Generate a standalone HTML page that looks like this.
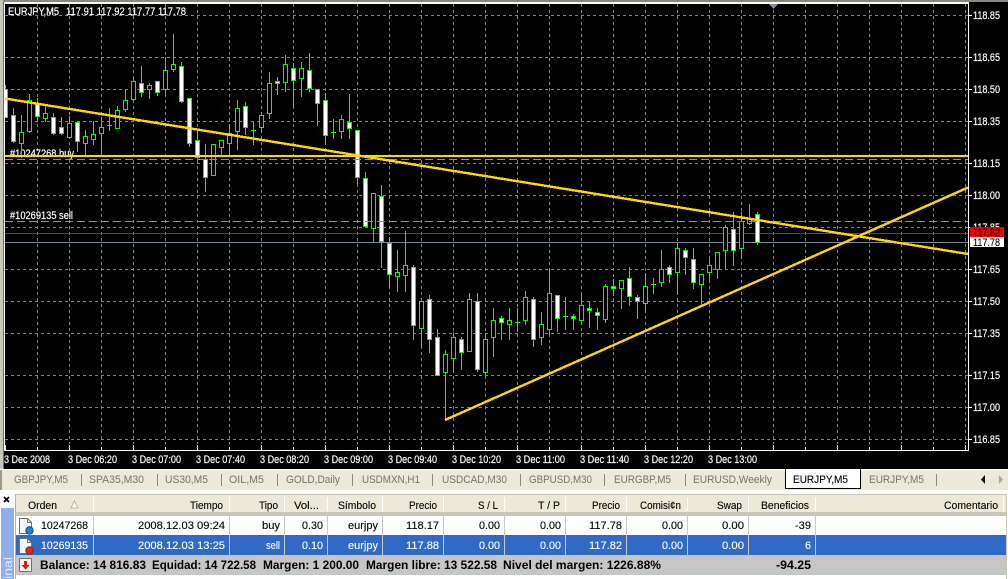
<!DOCTYPE html>
<html><head><meta charset="utf-8"><style>
html,body{margin:0;padding:0;background:#fff;width:1008px;height:579px;overflow:hidden}
svg{display:block}
text{font-family:"Liberation Sans",sans-serif;font-size:11px}
.c{font-size:11px;fill:#fff;stroke:#fff;stroke-width:.2}
.t{fill:#74746a}
.k{fill:#000;stroke:#000;stroke-width:.12}
.r{fill:#fff;stroke:#fff;stroke-width:.12}
.b{font-weight:bold;fill:#000;font-size:11.5px}
</style></head><body>
<svg width="1008" height="579" viewBox="0 0 1008 579" xmlns="http://www.w3.org/2000/svg">
<rect width="1008" height="579" fill="#fff"/>
<!-- chart frame -->
<rect x="0" y="0" width="1008" height="469" fill="#000"/>
<rect x="0" y="0" width="1008" height="2" fill="#8a8a7c"/>
<rect x="0" y="0" width="3" height="469" fill="#c8c6b8"/>
<rect x="3" y="2" width="1" height="467" fill="#6e6e66"/>
<g shape-rendering="crispEdges">
<rect x="4" y="2" width="965" height="2" fill="#fff"/>
<rect x="4" y="2" width="1" height="449" fill="#fff"/>
<rect x="968" y="2" width="1" height="449" fill="#fff"/>
<rect x="4" y="450" width="965" height="1" fill="#fff"/>
<!-- grid -->
<path fill="none" stroke="#778899" stroke-dasharray="3 3" d="M5 15.5H968M5 57.5H968M5 89.5H968M5 121.5H968M5 163.5H968M5 195.5H968M5 227.5H968M5 269.5H968M5 301.5H968M5 333.5H968M5 375.5H968M5 407.5H968M5 439.5H968"/>
<path fill="none" stroke="#778899" stroke-dasharray="3 3" d="M37.5 4V444M69.5 4V444M101.5 4V444M133.5 4V444M165.5 4V444M197.5 4V444M229.5 4V444M261.5 4V444M293.5 4V444M325.5 4V444M357.5 4V444M389.5 4V444M421.5 4V444M453.5 4V444M485.5 4V444M517.5 4V444M549.5 4V444M581.5 4V444M613.5 4V444M645.5 4V444M677.5 4V444M709.5 4V444M741.5 4V444M773.5 4V444M805.5 4V444M837.5 4V444M869.5 4V444M901.5 4V444M933.5 4V444M965.5 4V444"/>
<path fill="none" stroke="#fff" d="M5.5 445V450M37.5 447V450M69.5 445V450M101.5 447V450M133.5 445V450M165.5 447V450M197.5 445V450M229.5 447V450M261.5 445V450M293.5 447V450M325.5 445V450M357.5 447V450M389.5 445V450M421.5 447V450M453.5 445V450M485.5 447V450M517.5 445V450M549.5 447V450M581.5 445V450M613.5 447V450M645.5 445V450M677.5 447V450M709.5 445V450M741.5 447V450M773.5 445V450M805.5 447V450M837.5 445V450M869.5 447V450M901.5 445V450M933.5 447V450M965.5 445V450"/>
<path fill="none" stroke="#fff" d="M969 15.5h3M969 57.5h3M969 89.5h3M969 121.5h3M969 163.5h3M969 195.5h3M969 227.5h3M969 269.5h3M969 301.5h3M969 333.5h3M969 375.5h3M969 407.5h3M969 439.5h3"/>
</g>
<!-- order labels -->
<text class="c" lengthAdjust="spacingAndGlyphs" x="10" y="157" textLength="64">#10247268 buy</text>
<text class="c" lengthAdjust="spacingAndGlyphs" x="10" y="219" textLength="63">#10269135 sell</text>
<svg x="5" y="4" width="963" height="446" viewBox="5 4 963 446">
<g shape-rendering="crispEdges">
<!-- price lines -->
<rect x="5" y="233" width="963" height="1" fill="#e01010"/>
<rect x="5" y="242" width="963" height="1" fill="#778899"/>
<!-- wicks -->
<path fill="none" stroke="#00ff00" d="M5.5 85V118M13.5 108V143M21.5 115V158M29.5 94V133M37.5 98V122M45.5 106V122M53.5 113V135M61.5 117V135M69.5 116V137M77.5 122V152M85.5 130V155M93.5 121V145M101.5 117V155M109.5 108V131M117.5 106V128M125.5 89V112M133.5 77V101M141.5 66V97M149.5 83V99M157.5 81V96M165.5 57V96M173.5 34V72M181.5 62V103M189.5 98V147M197.5 130V161M205.5 144V192M213.5 144V175M221.5 140V156M229.5 124V156M237.5 100V150M245.5 102V135M253.5 122V145M261.5 112V132M269.5 72V119M277.5 77V95M285.5 55V92M293.5 63V107M301.5 62V97M309.5 53V92M317.5 89V126M325.5 93V144M333.5 119V139M341.5 115V139M349.5 94V139M357.5 130V185M365.5 172V226M373.5 193V243M381.5 185V268M389.5 237V288M397.5 250V292M405.5 231V292M413.5 265V340M421.5 301V347M429.5 295V353M437.5 329V375M445.5 350V420M453.5 332V372M461.5 337V370M469.5 293V351M477.5 293V372M485.5 333V377M493.5 308V357M501.5 316V340M509.5 308V340M517.5 308V332M525.5 291V325M533.5 297V347M541.5 312V345M549.5 268V336M557.5 295V332M565.5 297V330M573.5 314V330M581.5 295V325M589.5 302V328M597.5 308V330M605.5 284V323M613.5 279V296M621.5 280V309M629.5 267V306M637.5 295V319M645.5 273V313M653.5 278V294M661.5 250V287M669.5 265V283M677.5 243V294M685.5 248V275M693.5 248V289M701.5 274V306M709.5 259V282M717.5 252V279M725.5 225V269M733.5 212V266M741.5 212V258M749.5 204V225M757.5 212V245M107 125.5h5M251 130.5h5M331 132.5h5M515 322.5h5M563 316.5h5M651 284.5h5"/>
<!-- hollow bodies -->
<path fill="#000" stroke="#00ff00" d="M19.5 132.5h4V143.5h-4zM27.5 100.5h4V131.5h-4zM43.5 113.5h4V118.5h-4zM67.5 123.5h4V137.5h-4zM83.5 136.5h4V143.5h-4zM91.5 134.5h4V139.5h-4zM99.5 127.5h4V133.5h-4zM115.5 110.5h4V128.5h-4zM123.5 100.5h4V109.5h-4zM131.5 81.5h4V99.5h-4zM147.5 85.5h4V89.5h-4zM163.5 70.5h4V89.5h-4zM171.5 64.5h4V69.5h-4zM211.5 144.5h4V175.5h-4zM219.5 140.5h4V147.5h-4zM227.5 133.5h4V143.5h-4zM235.5 108.5h4V131.5h-4zM259.5 115.5h4V127.5h-4zM267.5 83.5h4V113.5h-4zM283.5 64.5h4V82.5h-4zM299.5 68.5h4V78.5h-4zM339.5 119.5h4V131.5h-4zM371.5 193.5h4V228.5h-4zM395.5 272.5h4V276.5h-4zM403.5 265.5h4V275.5h-4zM419.5 301.5h4V328.5h-4zM443.5 354.5h4V372.5h-4zM451.5 337.5h4V358.5h-4zM467.5 299.5h4V351.5h-4zM483.5 339.5h4V372.5h-4zM491.5 320.5h4V337.5h-4zM507.5 320.5h4V324.5h-4zM523.5 297.5h4V320.5h-4zM539.5 324.5h4V337.5h-4zM547.5 293.5h4V329.5h-4zM579.5 305.5h4V320.5h-4zM603.5 286.5h4V319.5h-4zM619.5 280.5h4V288.5h-4zM643.5 286.5h4V303.5h-4zM659.5 269.5h4V282.5h-4zM675.5 248.5h4V272.5h-4zM699.5 274.5h4V284.5h-4zM707.5 265.5h4V272.5h-4zM715.5 252.5h4V269.5h-4zM723.5 227.5h4V250.5h-4zM739.5 221.5h4V248.5h-4zM747.5 218.5h4V223.5h-4z"/>
<!-- filled bodies -->
<path fill="#fff" stroke="#00ff00" d="M3.5 89.5h4V117.5h-4zM11.5 115.5h4V141.5h-4zM35.5 103.5h4V116.5h-4zM51.5 117.5h4V133.5h-4zM59.5 127.5h4V133.5h-4zM75.5 122.5h4V141.5h-4zM139.5 83.5h4V92.5h-4zM155.5 81.5h4V92.5h-4zM179.5 66.5h4V101.5h-4zM187.5 98.5h4V143.5h-4zM195.5 140.5h4V157.5h-4zM203.5 159.5h4V177.5h-4zM243.5 106.5h4V127.5h-4zM275.5 81.5h4V83.5h-4zM291.5 68.5h4V80.5h-4zM307.5 70.5h4V88.5h-4zM315.5 89.5h4V103.5h-4zM323.5 100.5h4V135.5h-4zM347.5 122.5h4V128.5h-4zM355.5 130.5h4V177.5h-4zM363.5 178.5h4V226.5h-4zM379.5 196.5h4V241.5h-4zM387.5 243.5h4V274.5h-4zM411.5 267.5h4V325.5h-4zM427.5 299.5h4V339.5h-4zM435.5 337.5h4V375.5h-4zM459.5 339.5h4V352.5h-4zM475.5 301.5h4V369.5h-4zM499.5 318.5h4V322.5h-4zM531.5 299.5h4V339.5h-4zM555.5 295.5h4V318.5h-4zM571.5 316.5h4V318.5h-4zM587.5 308.5h4V310.5h-4zM595.5 312.5h4V315.5h-4zM611.5 286.5h4V288.5h-4zM627.5 278.5h4V296.5h-4zM635.5 297.5h4V301.5h-4zM667.5 267.5h4V274.5h-4zM683.5 250.5h4V257.5h-4zM691.5 259.5h4V282.5h-4zM731.5 229.5h4V250.5h-4zM755.5 214.5h4V242.5h-4z"/>
<!-- order dashed lines -->
<path fill="none" stroke="#32cd32" stroke-dasharray="8 4" d="M5 159.5H968M5 221.5H968"/>
<!-- drawn lines -->
<rect x="5" y="155" width="963" height="2" fill="#ffd700"/>
<path fill="none" stroke="#ffd700" stroke-width="2.4" d="M5 98.500L968 254M445 420L968 187.500"/>
</g>
</svg>
<!-- top marker -->
<path d="M769 4h9l-4.500 5z" fill="#8a8f98"/>
<!-- chart title -->
<text class="c" lengthAdjust="spacingAndGlyphs" x="8" y="15" textLength="51">EURJPY,M5</text>
<text class="c" lengthAdjust="spacingAndGlyphs" x="66" y="15" textLength="120">117.91 117.92 117.77 117.78</text>
<!-- price labels -->
<text class="c" lengthAdjust="spacingAndGlyphs" x="973" y="19" textLength="27">118.85</text>
<text class="c" lengthAdjust="spacingAndGlyphs" x="973" y="61" textLength="27">118.65</text>
<text class="c" lengthAdjust="spacingAndGlyphs" x="973" y="93" textLength="27">118.50</text>
<text class="c" lengthAdjust="spacingAndGlyphs" x="973" y="125" textLength="27">118.35</text>
<text class="c" lengthAdjust="spacingAndGlyphs" x="973" y="167" textLength="27">118.15</text>
<text class="c" lengthAdjust="spacingAndGlyphs" x="973" y="199" textLength="27">118.00</text>
<text class="c" lengthAdjust="spacingAndGlyphs" x="973" y="231" textLength="27">117.85</text>
<text class="c" lengthAdjust="spacingAndGlyphs" x="973" y="273" textLength="27">117.65</text>
<text class="c" lengthAdjust="spacingAndGlyphs" x="973" y="305" textLength="27">117.50</text>
<text class="c" lengthAdjust="spacingAndGlyphs" x="973" y="337" textLength="27">117.35</text>
<text class="c" lengthAdjust="spacingAndGlyphs" x="973" y="379" textLength="27">117.15</text>
<text class="c" lengthAdjust="spacingAndGlyphs" x="973" y="411" textLength="27">117.00</text>
<text class="c" lengthAdjust="spacingAndGlyphs" x="973" y="443" textLength="27">116.85</text>
<g shape-rendering="crispEdges">
<rect x="970" y="227" width="34" height="10" fill="#f00000"/>
<rect x="970" y="237" width="34" height="10" fill="#fff"/>
</g>
<text class="k" lengthAdjust="spacingAndGlyphs" x="973" y="236" textLength="27">117.82</text>
<text class="k" lengthAdjust="spacingAndGlyphs" x="973" y="246" textLength="27">117.78</text>
<!-- time labels -->
<text class="c" lengthAdjust="spacingAndGlyphs" x="4" y="463" textLength="46">3 Dec 2008</text>
<text class="c" lengthAdjust="spacingAndGlyphs" x="68" y="463" textLength="49">3 Dec 06:20</text>
<text class="c" lengthAdjust="spacingAndGlyphs" x="132" y="463" textLength="49">3 Dec 07:00</text>
<text class="c" lengthAdjust="spacingAndGlyphs" x="196" y="463" textLength="49">3 Dec 07:40</text>
<text class="c" lengthAdjust="spacingAndGlyphs" x="260" y="463" textLength="49">3 Dec 08:20</text>
<text class="c" lengthAdjust="spacingAndGlyphs" x="324" y="463" textLength="49">3 Dec 09:00</text>
<text class="c" lengthAdjust="spacingAndGlyphs" x="388" y="463" textLength="49">3 Dec 09:40</text>
<text class="c" lengthAdjust="spacingAndGlyphs" x="452" y="463" textLength="49">3 Dec 10:20</text>
<text class="c" lengthAdjust="spacingAndGlyphs" x="516" y="463" textLength="49">3 Dec 11:00</text>
<text class="c" lengthAdjust="spacingAndGlyphs" x="580" y="463" textLength="49">3 Dec 11:40</text>
<text class="c" lengthAdjust="spacingAndGlyphs" x="644" y="463" textLength="49">3 Dec 12:20</text>
<text class="c" lengthAdjust="spacingAndGlyphs" x="708" y="463" textLength="49">3 Dec 13:00</text>
<!-- tab bar -->
<g shape-rendering="crispEdges">
<rect x="0" y="469" width="1008" height="21" fill="#ece9d8"/>
<rect x="0" y="469" width="1008" height="1" fill="#fff"/>
<rect x="0" y="470" width="2" height="20" fill="#9c9a8c"/>
<rect x="0" y="490" width="1008" height="2" fill="#fff"/>
<path fill="none" stroke="#8a8a7e" d="M81.500 474V486M157.500 474V486M221.500 474V486M277.500 474V486M352.500 474V486M432.500 474V486M520.500 474V486M604.500 474V486M685.500 474V486M936.500 474V486"/>
<rect x="785" y="469" width="76" height="20" fill="#000"/>
<rect x="786" y="469" width="74" height="19" fill="#fff"/>
</g>
<text class="t" lengthAdjust="spacingAndGlyphs" x="14" y="483" textLength="54">GBPJPY,M5</text>
<text class="t" lengthAdjust="spacingAndGlyphs" x="89" y="483" textLength="55">SPA35,M30</text>
<text class="t" lengthAdjust="spacingAndGlyphs" x="165" y="483" textLength="43">US30,M5</text>
<text class="t" lengthAdjust="spacingAndGlyphs" x="229" y="483" textLength="35">OIL,M5</text>
<text class="t" lengthAdjust="spacingAndGlyphs" x="286" y="483" textLength="54">GOLD,Daily</text>
<text class="t" lengthAdjust="spacingAndGlyphs" x="362" y="483" textLength="58">USDMXN,H1</text>
<text class="t" lengthAdjust="spacingAndGlyphs" x="442" y="483" textLength="65">USDCAD,M30</text>
<text class="t" lengthAdjust="spacingAndGlyphs" x="529" y="483" textLength="63">GBPUSD,M30</text>
<text class="t" lengthAdjust="spacingAndGlyphs" x="614" y="483" textLength="57">EURGBP,M5</text>
<text class="t" lengthAdjust="spacingAndGlyphs" x="693" y="483" textLength="79">EURUSD,Weekly</text>
<text class="k" lengthAdjust="spacingAndGlyphs" x="793" y="483" textLength="55">EURJPY,M5</text>
<text class="t" lengthAdjust="spacingAndGlyphs" x="869" y="483" textLength="55">EURJPY,M5</text>
<path d="M985 475v9l-4-4.500z" fill="#000"/>
<path d="M999 475v9l4-4.500z" fill="#a8a89c"/>
<!-- terminal panel -->
<g shape-rendering="crispEdges">
<rect x="0" y="492" width="16" height="87" fill="#fff"/>
<rect x="1" y="508" width="13" height="71" fill="#8faeea"/>
<rect x="15" y="494" width="992" height="85" fill="#fff"/>
<rect x="15" y="494" width="992" height="1" fill="#c8c6b8"/>
<rect x="15" y="494" width="1" height="85" fill="#b8b6a8"/>
<rect x="1006" y="494" width="1" height="85" fill="#c8c6b8"/>
<rect x="16" y="495" width="990" height="17" fill="#ece9d8"/>
<rect x="16" y="512" width="990" height="4" fill="#cbc7b8"/>
<rect x="16" y="535" width="990" height="20" fill="#316ac5"/>
<rect x="16" y="555" width="990" height="20" fill="#c6c6c6"/>
<path fill="none" stroke="#fff" d="M93.500 497V511M229.500 497V511M284.500 497V511M327.500 497V511M382.500 497V511M443.500 497V511M504.500 497V511M565.500 497V511M626.500 497V511M687.500 497V511M748.500 497V511M815.500 497V511M1003.500 497V511"/>
<path fill="none" stroke="#c8c8c8" d="M93.500 516V555M229.500 516V555M284.500 516V555M327.500 516V555M382.500 516V555M443.500 516V555M504.500 516V555M565.500 516V555M626.500 516V555M687.500 516V555M748.500 516V555M815.500 516V555"/>
</g>
<path d="M4 497l5 5M9 497l-5 5" stroke="#000" stroke-width="1.700" fill="none"/>
<text transform="translate(12 579) rotate(-90)" lengthAdjust="spacingAndGlyphs" textLength="22" style="font-size:12px;fill:#e4ebfb" x="0" y="0">inal</text>
<!-- row icons -->
<path d="M19.500 518.500h8l4 4v11h-12z" fill="#f4f4f4" stroke="#707070"/>
<path d="M27.500 518.500v4h4" fill="none" stroke="#707070"/>
<circle cx="29.500" cy="530.500" r="3.700" fill="#1c7fd8" stroke="#0c4f90"/>
<path d="M19.500 538.500h8l4 4v11h-12z" fill="#f4f4f4" stroke="#707070"/>
<path d="M27.500 538.500v4h4" fill="none" stroke="#707070"/>
<circle cx="29.500" cy="550.500" r="3.700" fill="#e02a10" stroke="#90200c"/>
<rect x="19.500" y="558.500" width="12" height="13" rx="1" fill="#f4f2ea" stroke="#707070"/>
<path d="M24 561h3v4h2.500l-4 4.500-4-4.500H24z" fill="#d81c10"/>
<!-- header -->
<text class="k" lengthAdjust="spacingAndGlyphs" x="28" y="509" textLength="29">Orden</text>
<path d="M71 508l3.500-7 3.500 7z" fill="#fff" stroke="#b8b6a8"/>
<text class="k" lengthAdjust="spacingAndGlyphs" x="190" y="509" textLength="33">Tiempo</text>
<text class="k" lengthAdjust="spacingAndGlyphs" x="259" y="509" textLength="19">Tipo</text>
<text class="k" lengthAdjust="spacingAndGlyphs" x="294" y="509" textLength="25">Vol...</text>
<text class="k" lengthAdjust="spacingAndGlyphs" x="338" y="509" textLength="38">Símbolo</text>
<text class="k" lengthAdjust="spacingAndGlyphs" x="409" y="509" textLength="28">Precio</text>
<text class="k" lengthAdjust="spacingAndGlyphs" x="478" y="509" textLength="20">S / L</text>
<text class="k" lengthAdjust="spacingAndGlyphs" x="538" y="509" textLength="22">T / P</text>
<text class="k" lengthAdjust="spacingAndGlyphs" x="592" y="509" textLength="28">Precio</text>
<text class="k" lengthAdjust="spacingAndGlyphs" x="640" y="509" textLength="41">Comisi¢n</text>
<text class="k" lengthAdjust="spacingAndGlyphs" x="717" y="509" textLength="25">Swap</text>
<text class="k" lengthAdjust="spacingAndGlyphs" x="761" y="509" textLength="48">Beneficios</text>
<text class="k" lengthAdjust="spacingAndGlyphs" x="944" y="509" textLength="54">Comentario</text>
<!-- row 1 -->
<text class="k" lengthAdjust="spacingAndGlyphs" x="41" y="529" textLength="47">10247268</text>
<text class="k" lengthAdjust="spacingAndGlyphs" x="138" y="529" textLength="87">2008.12.03 09:24</text>
<text class="k" lengthAdjust="spacingAndGlyphs" x="262" y="529" textLength="18">buy</text>
<text class="k" lengthAdjust="spacingAndGlyphs" x="302" y="529" textLength="21">0.30</text>
<text class="k" lengthAdjust="spacingAndGlyphs" x="348" y="529" textLength="30">eurjpy</text>
<text class="k" lengthAdjust="spacingAndGlyphs" x="406" y="529" textLength="33">118.17</text>
<text class="k" lengthAdjust="spacingAndGlyphs" x="479" y="529" textLength="21">0.00</text>
<text class="k" lengthAdjust="spacingAndGlyphs" x="540" y="529" textLength="21">0.00</text>
<text class="k" lengthAdjust="spacingAndGlyphs" x="589" y="529" textLength="33">117.78</text>
<text class="k" lengthAdjust="spacingAndGlyphs" x="662" y="529" textLength="21">0.00</text>
<text class="k" lengthAdjust="spacingAndGlyphs" x="722" y="529" textLength="22">0.00</text>
<text class="k" lengthAdjust="spacingAndGlyphs" x="795" y="529" textLength="16">-39</text>
<!-- row 2 -->
<text class="r" lengthAdjust="spacingAndGlyphs" x="41" y="549" textLength="47">10269135</text>
<text class="r" lengthAdjust="spacingAndGlyphs" x="138" y="549" textLength="87">2008.12.03 13:25</text>
<text class="r" lengthAdjust="spacingAndGlyphs" x="266" y="549" textLength="14">sell</text>
<text class="r" lengthAdjust="spacingAndGlyphs" x="302" y="549" textLength="21">0.10</text>
<text class="r" lengthAdjust="spacingAndGlyphs" x="348" y="549" textLength="30">eurjpy</text>
<text class="r" lengthAdjust="spacingAndGlyphs" x="406" y="549" textLength="33">117.88</text>
<text class="r" lengthAdjust="spacingAndGlyphs" x="479" y="549" textLength="21">0.00</text>
<text class="r" lengthAdjust="spacingAndGlyphs" x="540" y="549" textLength="21">0.00</text>
<text class="r" lengthAdjust="spacingAndGlyphs" x="589" y="549" textLength="33">117.82</text>
<text class="r" lengthAdjust="spacingAndGlyphs" x="662" y="549" textLength="21">0.00</text>
<text class="r" lengthAdjust="spacingAndGlyphs" x="722" y="549" textLength="22">0.00</text>
<text class="r" lengthAdjust="spacingAndGlyphs" x="805" y="549" textLength="6">6</text>
<!-- balance row -->
<text class="b" lengthAdjust="spacingAndGlyphs" x="40" y="569" textLength="106">Balance: 14 816.83</text>
<text class="b" lengthAdjust="spacingAndGlyphs" x="152" y="569" textLength="104">Equidad: 14 722.58</text>
<text class="b" lengthAdjust="spacingAndGlyphs" x="263" y="569" textLength="96">Margen: 1 200.00</text>
<text class="b" lengthAdjust="spacingAndGlyphs" x="366" y="569" textLength="131">Margen libre: 13 522.58</text>
<text class="b" lengthAdjust="spacingAndGlyphs" x="503" y="569" textLength="158">Nivel del margen: 1226.88%</text>
<text class="b" lengthAdjust="spacingAndGlyphs" x="776" y="569" textLength="35">-94.25</text>
</svg>
</body></html>
